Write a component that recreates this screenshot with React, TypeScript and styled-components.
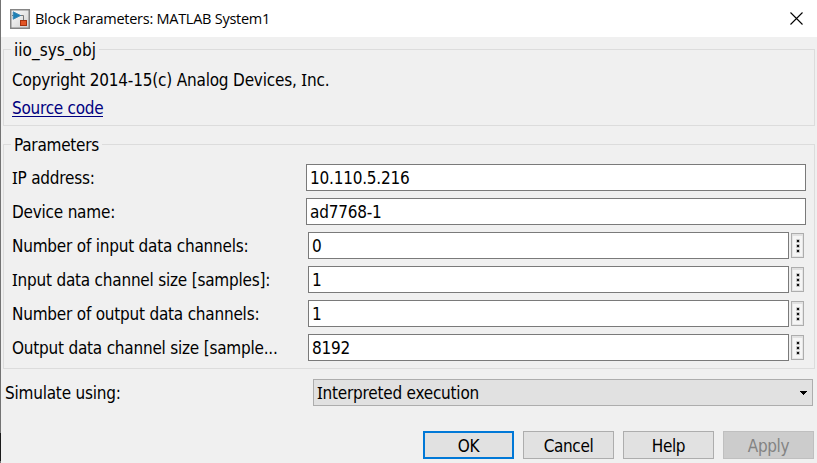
import React from "react";
import styled, { createGlobalStyle, css } from "styled-components";

const GlobalStyle = createGlobalStyle`
  *, *::before, *::after { box-sizing: border-box; }
  body { margin: 0; background: #f0f0f0; overflow: hidden; }
`;

const Window = styled.div`
  width: 817px;
  height: 463px;
  padding-left: 1px;
  background: linear-gradient(#737373 433px, #1a1a1a 433px, #1a1a1a 461px, #737373 461px);
`;

const Dialog = styled.div`
  height: 463px;
  display: flex;
  flex-direction: column;
  background: #f0f0f0;
  color: #000;
  font: 17px/20px "DejaVu Sans Condensed", "DejaVu Sans", sans-serif;
  letter-spacing: -0.22px;
  white-space: nowrap;
`;

const TitleBar = styled.header`
  height: 37px;
  flex: none;
  display: flex;
  align-items: center;
  padding: 0 14px 0 9px;
  background: #fff;
`;

const Title = styled.h1`
  flex: 1;
  margin: 0 0 0 5px;
  font: 400 14.5px/20px "Open Sans", "Noto Sans", sans-serif;
  letter-spacing: -0.26px;
`;

const CloseButton = styled.button`
  display: flex;
  padding: 0;
  border: 0;
  background: none;
`;

const Group = styled.fieldset<{ $height: number; $top: number }>`
  position: relative;
  flex: none;
  height: ${(p) => p.$height}px;
  margin: ${(p) => p.$top}px 2px 0;
  padding: 19px 8px 0;
  border: 1px solid #dcdcdc;
  min-width: 0;
`;

const GroupTitle = styled.div<{ $spacing?: number }>`
  position: absolute;
  top: -10px;
  left: 7px;
  padding: 0 3px;
  background: #f0f0f0;
  letter-spacing: ${(p) => p.$spacing ?? -0.24}px;
`;

const Description = styled.p`
  margin: 0;
  line-height: 22px;
  letter-spacing: -0.19px;
`;

const SourceLink = styled.a`
  display: block;
  width: 91px;
  margin-top: 6px;
  height: 20px;
  line-height: 22px;
  border-bottom: 1px solid #000080;
  color: #000080;
  letter-spacing: -0.25px;
  text-decoration: none;
`;

const ParameterRow = styled.div`
  height: 27px;
  margin-bottom: 7px;
  display: flex;
  align-items: center;
`;

const Label = styled.label`
  width: 294px;
  flex: none;
`;

const Field = styled.div<{ $narrow?: boolean }>`
  height: 27px;
  width: ${(p) => (p.$narrow ? 481 : 500)}px;
  margin-left: ${(p) => (p.$narrow ? 2 : 0)}px;
  padding: 3px 3px 0;
  border: 1px solid #7a7a7a;
  background: #fff;
`;

const MoreButton = styled.button`
  width: 13px;
  height: 25px;
  margin-left: 2px;
  padding: 0 0 0 1px;
  display: flex;
  align-items: center;
  justify-content: center;
  border: 1px solid #adadad;
  background: #f5f5f5;
  box-shadow: inset 0 2px #e1e1e1, inset 0 0 0 1px #e6e6e6;
`;

const SimulateRow = styled.div`
  display: flex;
  align-items: center;
  margin: 10px 4px 0;
`;

const SimulateLabel = styled.label`
  width: 308px;
`;

const Select = styled.div`
  width: 500px;
  height: 27px;
  display: flex;
  align-items: center;
  justify-content: space-between;
  padding: 0 5px 0 3px;
  border: 1px solid #adadad;
  background: #e1e1e1;
`;

const Actions = styled.footer`
  display: flex;
  justify-content: flex-end;
  gap: 9px;
  margin: 25px 3px 0 0;
`;

const ActionButton = styled.button<{ $primary?: boolean }>`
  width: 91px;
  height: 28px;
  padding: 1px 0 0;
  border: 1px solid #adadad;
  background: #e1e1e1;
  color: #000;
  font: inherit;
  letter-spacing: -0.35px;
  ${(p) => p.$primary && css`border: 2px solid #0078d7; padding: 2px 0 0;`}
  &:disabled {
    border-color: #bfbfbf;
    background: #ccc;
    color: #838383;
  }
`;

const SerifCapital = styled.span`
  font-family: "Noto Sans", sans-serif;
  line-height: 1;
`;

function Caption({ text }: { text: string }) {
  return (
    <span>
      {text.split(/(I)/).map((part, i) =>
        part === "I" ? <SerifCapital key={i}>I</SerifCapital> : part
      )}
    </span>
  );
}

function BlockIcon() {
  return (
    <svg width="20" height="20" viewBox="0 0 20 20">
      <defs>
        <linearGradient id="tile" x1="0" y1="0" x2="1" y2="1">
          <stop offset="0" stopColor="#fff" />
          <stop offset="1" stopColor="#cfcfcf" />
        </linearGradient>
      </defs>
      <rect x="0.75" y="0.75" width="18.5" height="18.5" fill="url(#tile)" stroke="#858585" strokeWidth="1.5" />
      <path d="M2 6.5H4M10 6.5H13.5V12" fill="none" stroke="#777" />
      <path d="M3.2 2.8L10.5 6.5L3.2 10.2Z" fill="#1d80b5" stroke="#3b87b5" />
      <rect x="10.5" y="11.5" width="6" height="5" fill="#e35525" stroke="#a5320e" />
    </svg>
  );
}

function MoreIcon() {
  return (
    <svg width="4" height="14" viewBox="0 0 4 14">
      {[0, 5, 10].map((y) => (
        <g key={y}>
          <rect y={y} width="4" height="4" rx="1" fill="#c4c4c4" />
          <rect x="1" y={y + 1} width="2" height="2" fill="#111" />
        </g>
      ))}
    </svg>
  );
}

const parameters = [
  { label: "IP address:", value: "10.110.5.216" },
  { label: "Device name:", value: "ad7768-1" },
  { label: "Number of input data channels:", value: "0", more: true },
  { label: "Input data channel size [samples]:", value: "1", more: true },
  { label: "Number of output data channels:", value: "1", more: true },
  { label: "Output data channel size [sample...", value: "8192", more: true },
];

export default function App() {
  return (
    <>
      <GlobalStyle />
      <Window>
        <Dialog>
          <TitleBar>
            <BlockIcon />
            <Title>Block Parameters: MATLAB System1</Title>
            <CloseButton aria-label="Close">
              <svg width="13" height="13" viewBox="0 0 13 13">
                <path d="M0.5 0.5L12.5 12.5M12.5 0.5L0.5 12.5" stroke="#000" strokeWidth="1.1" />
              </svg>
            </CloseButton>
          </TitleBar>
          <Group $height={77} $top={12}>
            <GroupTitle $spacing={0.05}>iio_sys_obj</GroupTitle>
            <Description><Caption text="Copyright 2014-15(c) Analog Devices, Inc." /></Description>
            <SourceLink>Source code</SourceLink>
          </Group>
          <Group $height={225} $top={18}>
            <GroupTitle>Parameters</GroupTitle>
            {parameters.map((p) => (
              <ParameterRow key={p.label}>
                <Label><Caption text={p.label} /></Label>
                <Field $narrow={p.more}>{p.value}</Field>
                {p.more && <MoreButton aria-label="More"><MoreIcon /></MoreButton>}
              </ParameterRow>
            ))}
          </Group>
          <SimulateRow>
            <SimulateLabel>Simulate using:</SimulateLabel>
            <Select>
              <Caption text="Interpreted execution" />
              <svg width="7" height="4" viewBox="0 0 7 4" shapeRendering="crispEdges">
                <path d="M0 0H7V1H6V2H5V3H4V4H3V3H2V2H1V1H0Z" />
              </svg>
            </Select>
          </SimulateRow>
          <Actions>
            <ActionButton $primary>OK</ActionButton>
            <ActionButton>Cancel</ActionButton>
            <ActionButton>Help</ActionButton>
            <ActionButton disabled>Apply</ActionButton>
          </Actions>
        </Dialog>
      </Window>
    </>
  );
}
